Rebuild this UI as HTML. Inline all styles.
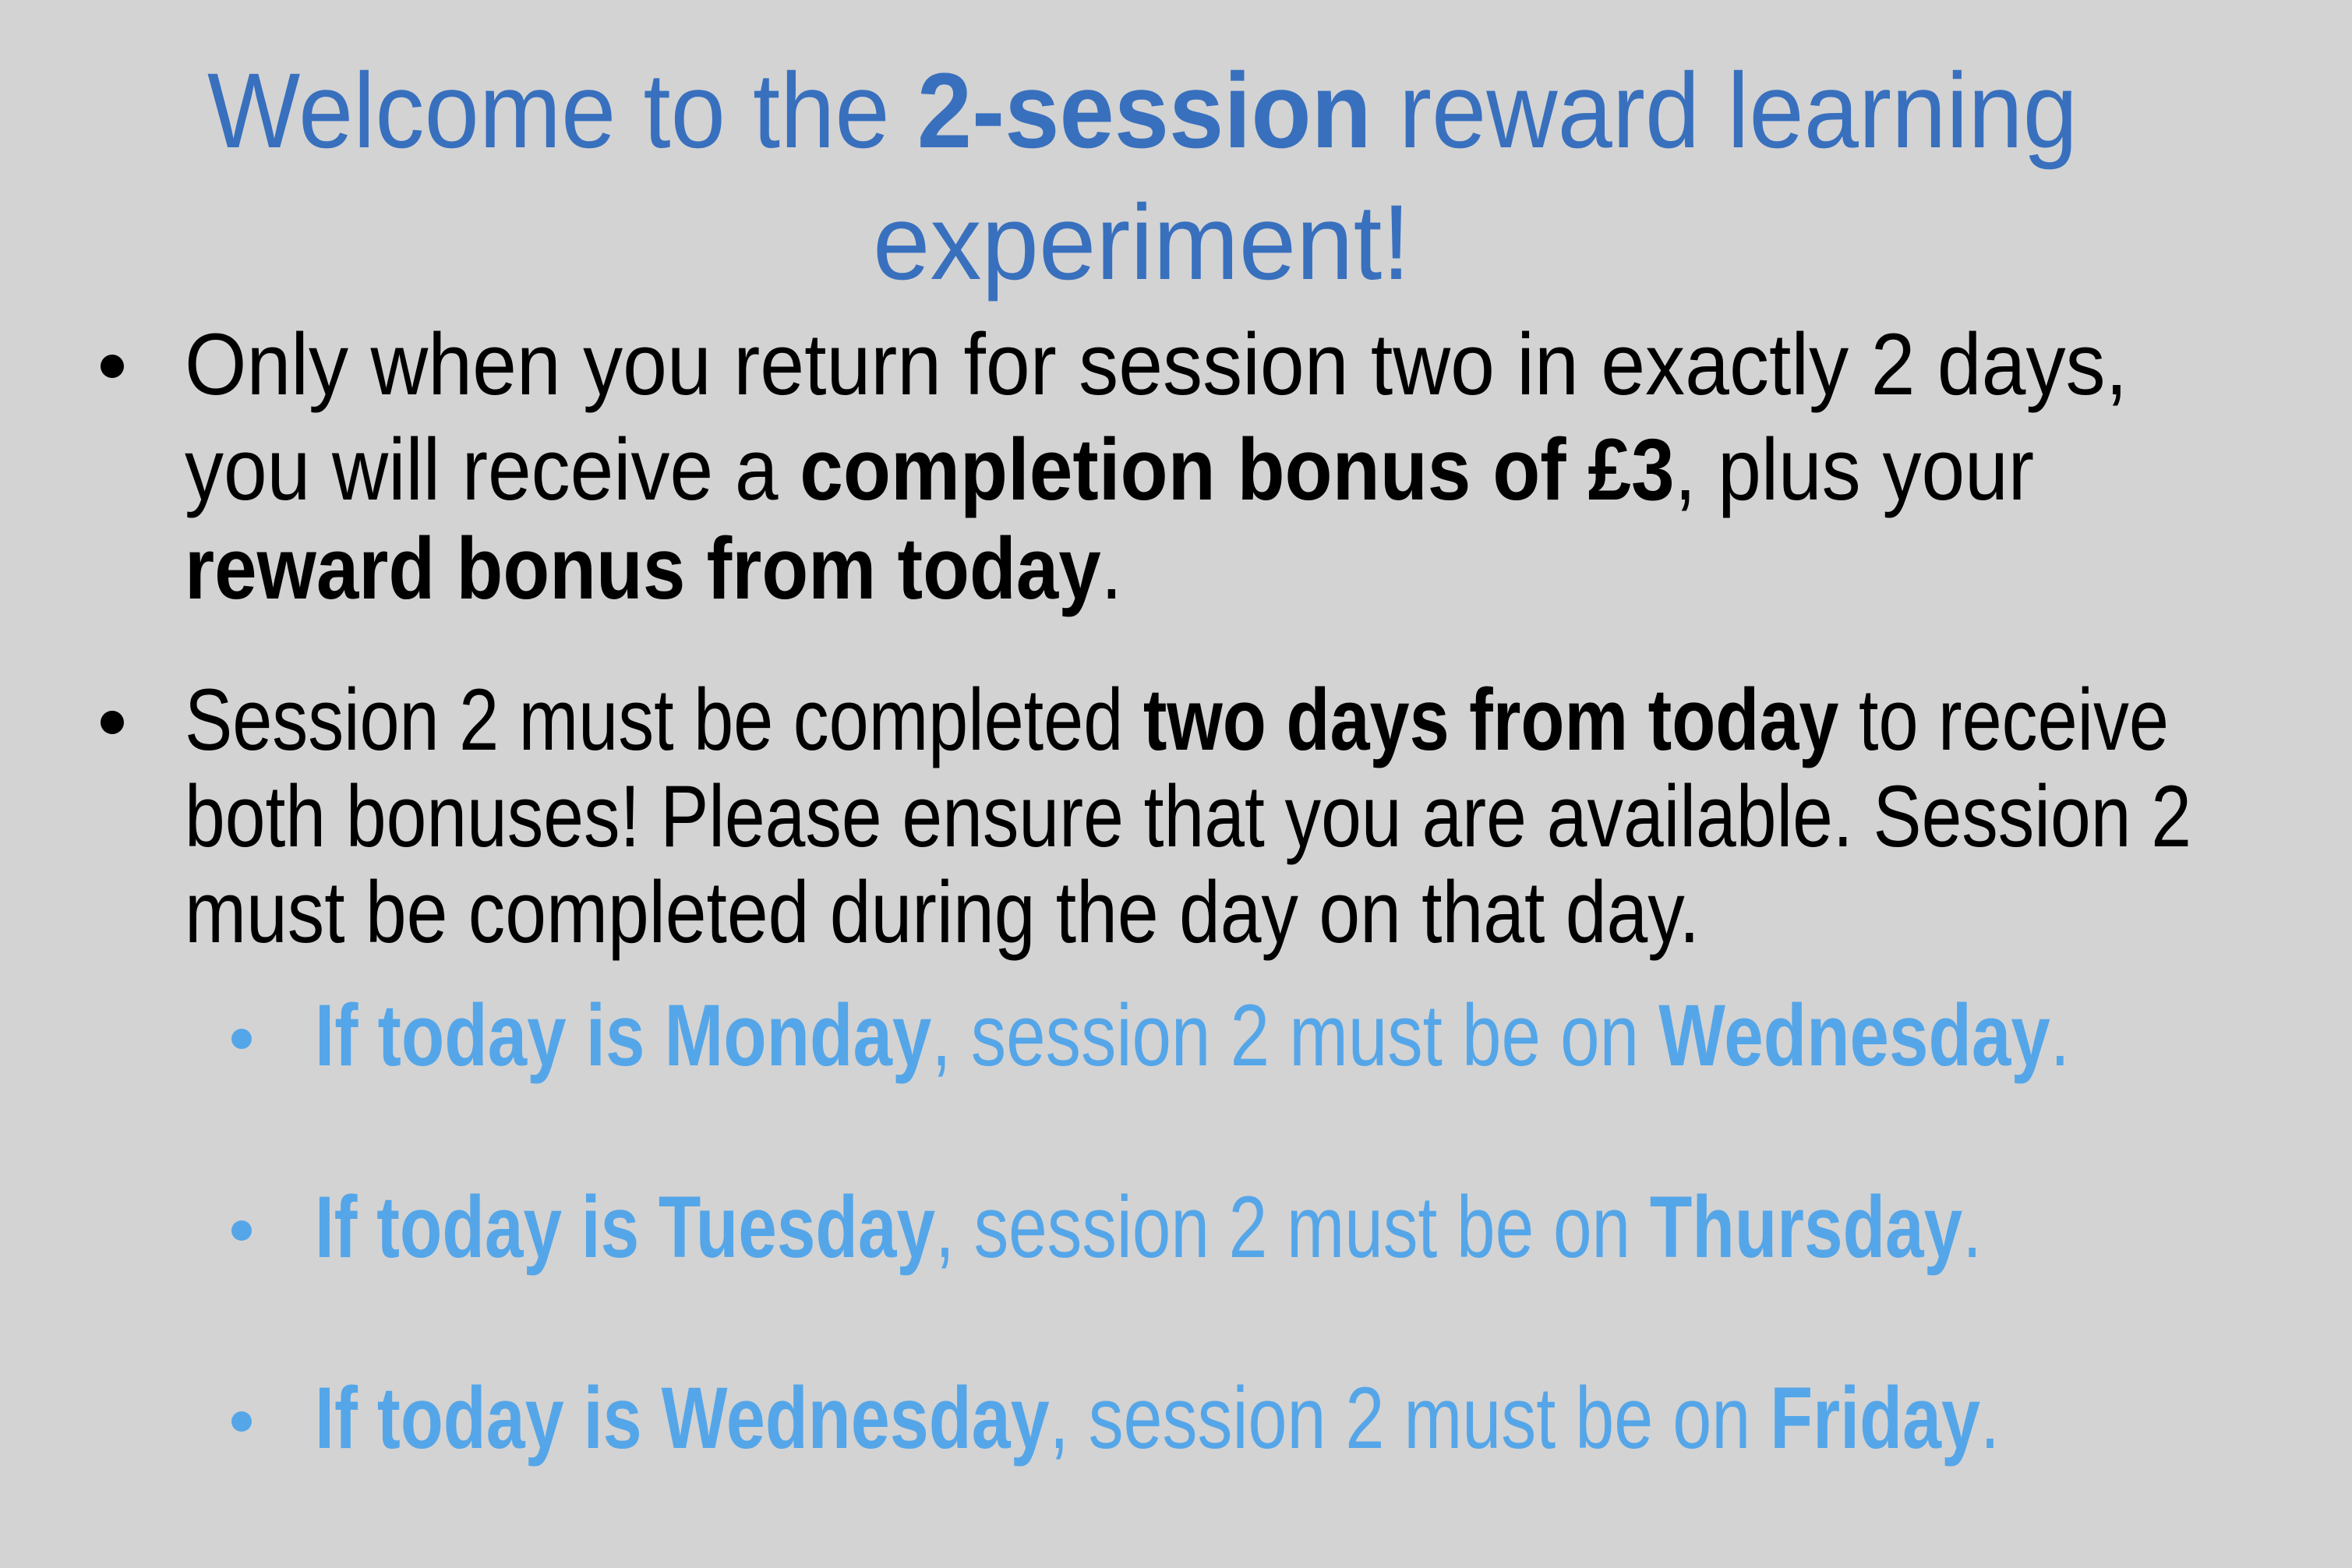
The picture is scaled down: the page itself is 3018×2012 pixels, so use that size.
<!DOCTYPE html>
<html><head><meta charset="utf-8"><style>
html,body{margin:0;padding:0;background:#d3d3d3;}
svg{display:block;}
text{font-family:"Liberation Sans",sans-serif;}
.b{font-weight:bold;}
</style></head><body>
<svg width="3018" height="2012" viewBox="0 0 3018 2012" xmlns="http://www.w3.org/2000/svg">
<rect width="3018" height="2012" fill="#d3d3d3"/>
<g fill="#3870be" font-size="137">
<text x="266" y="189" textLength="2400" lengthAdjust="spacingAndGlyphs">Welcome to the <tspan class="b">2-session</tspan> reward learning</text>
<text x="1120" y="358" textLength="690" lengthAdjust="spacingAndGlyphs">experiment!</text>
</g>
<g fill="#000" font-size="112">
<circle cx="144" cy="470" r="15"/>
<text x="237" y="506" textLength="2493" lengthAdjust="spacingAndGlyphs">Only when you return for session two in exactly 2 days,</text>
<text x="237" y="641" textLength="2373" lengthAdjust="spacingAndGlyphs">you will receive a <tspan class="b">completion bonus of £3</tspan>, plus your</text>
<text x="237" y="768" textLength="1203" lengthAdjust="spacingAndGlyphs"><tspan class="b">reward bonus from today</tspan>.</text>
<circle cx="144" cy="927" r="15"/>
<text x="237" y="962" textLength="2546" lengthAdjust="spacingAndGlyphs">Session 2 must be completed <tspan class="b">two days from today</tspan> to receive</text>
<text x="237" y="1086" textLength="2575" lengthAdjust="spacingAndGlyphs">both bonuses! Please ensure that you are available.  Session 2</text>
<text x="237" y="1209" textLength="1944" lengthAdjust="spacingAndGlyphs">must be completed during the day on that day.</text>
</g>
<g fill="#55a6e8" font-size="112">
<circle cx="310" cy="1333" r="13"/>
<text x="404" y="1367" textLength="2252" lengthAdjust="spacingAndGlyphs"><tspan class="b">If today is Monday</tspan>, session 2 must be on <tspan class="b">Wednesday</tspan>.</text>
<circle cx="310" cy="1579" r="13"/>
<text x="404" y="1613" textLength="2139" lengthAdjust="spacingAndGlyphs"><tspan class="b">If today is Tuesday</tspan>, session 2 must be on <tspan class="b">Thursday</tspan>.</text>
<circle cx="310" cy="1824" r="13"/>
<text x="404" y="1858" textLength="2162" lengthAdjust="spacingAndGlyphs"><tspan class="b">If today is Wednesday</tspan>, session 2 must be on <tspan class="b">Friday</tspan>.</text>
</g>
</svg>
</body></html>
